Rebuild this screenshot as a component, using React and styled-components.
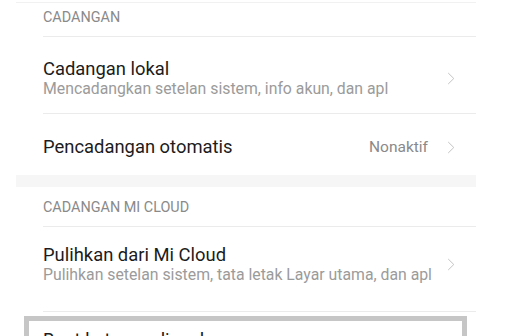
import React from "react";
import styled, { createGlobalStyle } from "styled-components";

const Global = createGlobalStyle`
  html, body { margin: 0; padding: 0; background: #ffffff; }
  body { font-family: Roboto, "Noto Sans", "Liberation Sans", sans-serif; overflow: hidden; }
`;

const Page = styled.div`
  width: 460px;
  margin-left: 16px;
  padding-top: 2px;
  height: 334px;
  overflow: hidden;
`;

const Rule = styled.div`
  height: 1px;
  background: ${(p) => p.$color || "#ebebeb"};
  margin-left: ${(p) => (p.$inset ? "27px" : "0")};
`;

const SectionHeader = styled.div`
  padding: ${(p) => p.$pad || "6px 0 10px"};
  padding-left: 27px;
  font-size: 14.4px;
  line-height: 17px;
  color: #8a8a8a;
  text-transform: uppercase;
`;

const Band = styled.div`
  height: 12px;
  background: #f6f6f6;
`;

const Row = styled.div`
  display: flex;
  align-items: center;
  padding: ${(p) => p.$pad};
  padding-left: 27px;
  padding-right: 21px;
`;

const Texts = styled.div`
  flex: 1;
  display: flex;
  flex-direction: column;
  min-width: 0;
`;

const Title = styled.div`
  font-size: 18.4px;
  line-height: ${(p) => p.$lh || "21px"};
  color: #1c1c1c;
  white-space: nowrap;
`;

const Subtitle = styled.div`
  font-size: 15.8px;
  line-height: 19px;
  color: #9b9b9b;
  white-space: nowrap;
`;

const Value = styled.span`
  font-size: 15.5px;
  color: #8a8a8a;
  margin-right: 19px;
`;

const ChevronSvg = styled.svg`
  flex: none;
  display: block;
`;

const Chevron = () => (
  <ChevronSvg width="8" height="13" viewBox="0 0 8 13">
    <path d="M1.2 1 L6.8 6.5 L1.2 12" fill="none" stroke="#c4c4c4" strokeWidth="1" />
  </ChevronSvg>
);

const Highlight = styled.div`
  box-sizing: border-box;
  margin-top: 4px;
  margin-left: 8px;
  width: 443px;
  height: 40px;
  border: 5px solid #c6c6c6;
  border-bottom: none;
  background: #fff;
  padding: 8px 0 0 14px;
`;

export default function App() {
  return (
    <>
      <Global />
      <Page>
        <Rule $color="#f1f1f1" />
        <SectionHeader>Cadangan</SectionHeader>
        <Rule $inset />
        <Row $pad="21px 0 15px">
          <Texts>
            <Title>Cadangan lokal</Title>
            <Subtitle>Mencadangkan setelan sistem, info akun, dan apl</Subtitle>
          </Texts>
          <Chevron />
        </Row>
        <Rule $inset />
        <Row $pad="22px 0 17px">
          <Texts>
            <Title $lh="22px">Pencadangan otomatis</Title>
          </Texts>
          <Value>Nonaktif</Value>
          <Chevron />
        </Row>
        <Band />
        <SectionHeader $pad="12px 0 10px">Cadangan Mi Cloud</SectionHeader>
        <Rule $inset />
        <Row $pad="17px 0 27px">
          <Texts>
            <Title>Pulihkan dari Mi Cloud</Title>
            <Subtitle>Pulihkan setelan sistem, tata letak Layar utama, dan apl</Subtitle>
          </Texts>
          <Chevron />
        </Row>
        <Rule $inset />
        <Highlight>
          <Title>Buat kata sandi cadangan</Title>
        </Highlight>
      </Page>
    </>
  );
}
